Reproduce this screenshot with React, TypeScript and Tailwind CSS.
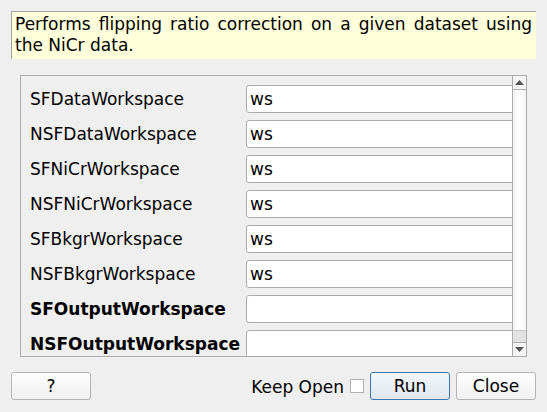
import React from "react";

const rows: { label: string; value: string; bold?: boolean }[] = [
  { label: "SFDataWorkspace", value: "ws" },
  { label: "NSFDataWorkspace", value: "ws" },
  { label: "SFNiCrWorkspace", value: "ws" },
  { label: "NSFNiCrWorkspace", value: "ws" },
  { label: "SFBkgrWorkspace", value: "ws" },
  { label: "NSFBkgrWorkspace", value: "ws" },
  { label: "SFOutputWorkspace", value: "", bold: true },
  { label: "NSFOutputWorkspace", value: "", bold: true },
];

function Btn({ children, primary }: { children: React.ReactNode; primary?: boolean }) {
  return (
    <div
      className={
        "w-[80px] h-[28px] rounded-[3px] border flex items-center justify-center pt-[2px] " +
        (primary
          ? "border-[#3a76b0] bg-gradient-to-b from-[#f3f6f9] to-[#dfe7ee]"
          : "border-[#b4b4b4] bg-gradient-to-b from-[#fdfdfd] to-[#f0f0f0]")
      }
    >
      {children}
    </div>
  );
}

export default function App() {
  return (
    <div
      className="w-[547px] h-[412px] bg-[#efefef] flex flex-col pt-[11px] px-[11px] text-[17px] text-black overflow-hidden"
      style={{ fontFamily: '"DejaVu Sans", sans-serif' }}
    >
      <div className="h-[48px] w-[525px] border-t border-l border-[#a0a0a0] bg-[#ffffdc] pl-[3px] pr-[4px] pt-[2px] leading-[21px] text-justify">
        Performs flipping ratio correction on a given dataset using the NiCr data.
      </div>

      <div className="mt-[16px] ml-[9px] w-[507px] h-[282px] border border-[#ababab] flex">
        <div className="flex-1 overflow-hidden pt-[9px] pl-[9px] flex flex-col gap-[7px]">
          {rows.map((r) => (
            <div key={r.label} className="flex items-center h-[28px] shrink-0">
              <div className={"w-[216px] shrink-0 whitespace-nowrap pt-[2px] " + (r.bold ? "font-bold" : "")}>
                {r.label}
              </div>
              <div className="w-[300px] shrink-0 h-[28px] rounded-[3px] border border-[#ababab] bg-white flex items-center pl-[3px] pt-[2px]">
                {r.value}
              </div>
            </div>
          ))}
        </div>
        <div className="w-[14px] border-l border-[#ababab] flex flex-col bg-[#ececec]">
          <div className="h-[14px] border-b border-[#ababab] flex items-center justify-center bg-[#f4f4f4]">
            <svg width="9" height="5" viewBox="0 0 9 5">
              <path d="M4.5 0 L9 5 L0 5 Z" fill="#555" />
            </svg>
          </div>
          <div className="h-[241px] bg-gradient-to-r from-[#f2f2f2] via-white to-[#f4f4f4] border-b border-[#c8c8c8]" />
          <div className="flex-1 bg-[#e2e2e2]" />
          <div className="h-[14px] border-t border-[#ababab] flex items-center justify-center bg-[#f4f4f4]">
            <svg width="9" height="5" viewBox="0 0 9 5">
              <path d="M0 0 L9 0 L4.5 5 Z" fill="#555" />
            </svg>
          </div>
        </div>
      </div>

      <div className="mt-[15px] flex items-center h-[28px]">
        <Btn>?</Btn>
        <div className="flex-1" />
        <span className="leading-[28px] pt-[2px]">Keep Open</span>
        <div className="ml-[6px] w-[14px] h-[14px] border border-[#b0b0b0] bg-white" />
        <div className="ml-[6px]">
          <Btn primary>Run</Btn>
        </div>
        <div className="ml-[6px]">
          <Btn>Close</Btn>
        </div>
      </div>
    </div>
  );
}
